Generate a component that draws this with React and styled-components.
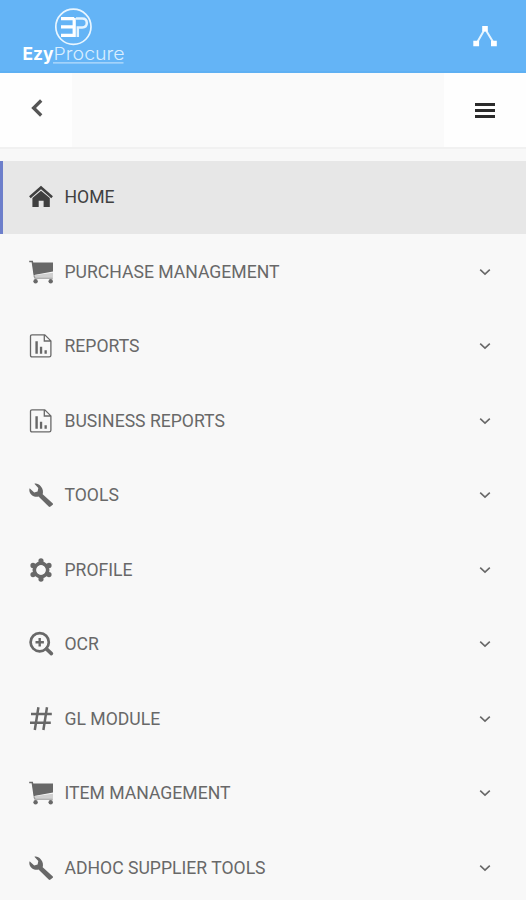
// ==========================================================================
// EzyProcure mobile navigation
// ==========================================================================
import React from 'react';
import styled, {createGlobalStyle} from 'styled-components';

const GlobalStyle = createGlobalStyle`
  * {
    box-sizing: border-box;
  }
  body {
    margin: 0;
    background: #f8f8f8;
    font-family: Roboto, "Liberation Sans", sans-serif;
  }
`

const Page = styled.div`
  display: flex;
  flex-direction: column;
  height: 900px;
  overflow: hidden;
`

const Header = styled.header`
  display: flex;
  justify-content: space-between;
  flex: none;
  height: 73px;
  padding: 0 28px 0 20px;
  background: #64b4f6;
  border-bottom: 2px solid #5eb0f3;
`

const HeaderButton = styled.button`
  display: flex;
  align-items: center;
  padding: 0;
  border: 0;
  background: none;
`

const Toolbar = styled.div`
  display: flex;
  justify-content: space-between;
  flex: none;
  height: 76px;
  background: #fafafa;
  border-bottom: 2px solid #f1f1f1;
`

const ToolbarButton = styled.button`
  display: flex;
  align-items: center;
  justify-content: center;
  width: ${({width}) => width}px;
  padding: 0 0 ${({lift}) => lift || 0}px;
  border: 0;
  background: #fefefe;
`

const Menu = styled.nav`
  display: flex;
  flex-direction: column;
  gap: 1.55px;
  padding-top: 11.6px;
`

const MenuLink = styled.a`
  display: flex;
  align-items: center;
  flex: none;
  height: 73px;
  padding: 0 35px 0 26px;
  border-left: 3px solid ${({$active}) => $active ? '#6d7fcb' : 'transparent'};
  background: ${({$active}) => $active ? '#e7e7e7' : 'transparent'};
  color: ${({$active}) => $active ? '#404040' : '#686868'};
  cursor: pointer;
`

const Label = styled.span`
  flex: 1;
  margin-left: 11.5px;
  font-size: 17.6px;
  line-height: 24px;
  white-space: nowrap;
`

const Glyph = styled.svg`
  display: block;
  flex: none;
  overflow: visible;
  fill: none;
  stroke: none;
`

const Logo = () => (
  <Glyph width="108" height="71" viewBox="20 0 108 71">
    <circle cx="73.4" cy="26.8" r="17.6" stroke="#e9f6ff" strokeWidth="1.7" />
    <path d="M61 18.6h13.2M61 26.9h13M61 35.4h13.2V18" stroke="#fff" strokeWidth="3.2" />
    <path d="M76 18.6h6.2q4.6 0 4.6 4.4t-4.6 4.4H77.8v9.6" stroke="#e4f4ff" strokeWidth="2.5" />
    <text x="22.4" y="60.3" fill="#fff" fontFamily="Inter, sans-serif" fontSize="17.4" fontWeight="700" textLength="31" lengthAdjust="spacingAndGlyphs">Ezy</text>
    <text x="53.6" y="60.3" fill="#d9eeff" fontFamily="Inter, sans-serif" fontSize="17.4" fontWeight="300" textLength="71" lengthAdjust="spacingAndGlyphs">Procure</text>
    <path d="M53 62.8h70.5" stroke="#b9defc" strokeWidth="1.2" />
  </Glyph>
);

const NodesIcon = () => (
  <Glyph width="26" height="24" viewBox="0 0 26 24">
    <path d="M4.5 19.5L13 4.7l9 14.8" stroke="#e6f5ff" strokeWidth="2" />
    <path d="M10.2 2h5.6v5.6h-5.6zM1.3 16.7h5.8v5.6H1.3zM19 16.7h5.8v5.6H19z" fill="#fff" />
  </Glyph>
);

const BackIcon = () => (
  <Glyph width="12" height="18" viewBox="-1 0 12 18">
    <path d="M10.2 1.5L2.6 9l7.6 7.5" stroke="#555" strokeWidth="3.3" />
  </Glyph>
);

const BarsIcon = () => (
  <Glyph width="20" height="16" viewBox="0 0 20 16">
    <path d="M0 2.5h20M0 8.5h20M0 14.5h20" stroke="#2b2b2b" strokeWidth="2.8" />
  </Glyph>
);

const ChevronIcon = () => (
  <Glyph width="12" height="8" viewBox="0 0 12 8">
    <path d="M1.2 1.7L6 6.1l4.8-4.4" stroke="#686868" strokeWidth="1.6" />
  </Glyph>
);

const icons = {
  home: (
    <>
      <path d="M.9 12.3L12 2.5l11.1 9.8" stroke="currentColor" strokeWidth="2.5" />
      <path d="M3.4 13.1L12 5.8l8.8 7.3v8.9H14.6v-6.3H9.7v6.3H3.4z" fill="currentColor" />
    </>
  ),
  cart: (
    <>
      <path d="M.2 1.6h3.1l2.1 14" stroke="currentColor" strokeWidth="1.5" />
      <path d="M3.4 2.4H24v9L5 15.1z" fill="currentColor" />
      <path d="M5.3 15.2L24 12.8v4.4H5.8z" fill="#d0d0d0" />
      <path d="M5 16l1 2.1H23.8" stroke="#999" strokeWidth="1.3" />
      <circle cx="6.6" cy="21.2" r="2.2" fill="currentColor" />
      <circle cx="21.7" cy="21.2" r="2.2" fill="currentColor" />
    </>
  ),
  report: (
    <>
      <path d="M3 .9h12.8l6.1 6v14.3q0 1.7-1.7 1.7H3q-1.5 0-1.5-1.7V2.4Q1.5.9 3 .9zM15.3 1v6h6.4" stroke="currentColor" strokeWidth="1.3" />
      <path d="M6.4 7.2h2.4v12.6H6.4zM10.9 12.8h2.3v7h-2.3zM15.5 16.3h2.3v3.5h-2.3z" fill="currentColor" />
    </>
  ),
  wrench: (
    <path d="M23.6 20.3l-9.9-9c.7-2.8.2-5.8-1.8-7.9C9.8 1 7.4.1 5.4.7l3.9 4.2-.7 3.6-3.4.9L.6 5.2c-.9 2.2.2 5.3 2.3 7 2.1 1.6 4.5 2 6.6 1.4l10.2 9.9c.6.6 1.2.6 1.8 0l2.2-1.7c.5-.5.5-1-.1-1.5z" fill="currentColor" />
  ),
  gear: (
    <>
      <path fillRule="evenodd" d="M12 2.7Q14.6 6 19.9 7.4Q18.8 12 19.9 16.6Q14.6 18 12 21.3Q9.4 18 4.1 16.6Q5.2 12 4.1 7.4Q9.4 6 12 2.7zM12 6.8a5.2 5.2 0 1 0 0 10.4a5.2 5.2 0 1 0 0-10.4z" fill="currentColor" />
      <circle cx="12" cy="12" r="6.7" stroke="currentColor" strokeWidth="3.6" />
      <path d="M12 2.9v0M20 7.4v0M20 16.6v0M12 21.1v0M4 16.6v0M4 7.4v0" stroke="currentColor" strokeWidth="5.2" strokeLinecap="round" />
    </>
  ),
  zoom: (
    <>
      <circle cx="10.7" cy="10.2" r="9.1" stroke="currentColor" strokeWidth="2.7" />
      <path d="M10.7 6v8.4M6.5 10.2h8.4" stroke="currentColor" strokeWidth="2.4" />
      <path d="M17.4 16.9l5 4.7" stroke="currentColor" strokeWidth="3.6" strokeLinecap="round" />
    </>
  ),
  hash: (
    <path d="M9.4.3L5.8 23M18 .3L14.4 23M2 7h20.8M1 15.8h20.8" stroke="currentColor" strokeWidth="2.5" />
  )
};

const items = [
  {label: "HOME", icon: "home", active: true},
  {label: "PURCHASE MANAGEMENT", icon: "cart"},
  {label: "REPORTS", icon: "report"},
  {label: "BUSINESS REPORTS", icon: "report"},
  {label: "TOOLS", icon: "wrench"},
  {label: "PROFILE", icon: "gear"},
  {label: "OCR", icon: "zoom"},
  {label: "GL MODULE", icon: "hash"},
  {label: "ITEM MANAGEMENT", icon: "cart"},
  {label: "ADHOC SUPPLIER TOOLS", icon: "wrench"}
];

const Item = ({label, icon, active}) => (
  <MenuLink $active={active}>
    <Glyph width="24" height="24" viewBox="0 0 24 24">{icons[icon]}</Glyph>
    <Label>{label}</Label>
    {!active && <ChevronIcon />}
  </MenuLink>
);

const App = () => (
  <Page>
    <GlobalStyle />
    <Header>
      <Logo />
      <HeaderButton title="Network"><NodesIcon /></HeaderButton>
    </Header>
    <Toolbar>
      <ToolbarButton width={72} lift={5} title="Back"><BackIcon /></ToolbarButton>
      <ToolbarButton width={82} title="Menu"><BarsIcon /></ToolbarButton>
    </Toolbar>
    <Menu>
      {items.map(item => <Item key={item.label} {...item} />)}
    </Menu>
  </Page>
);

export default App;
